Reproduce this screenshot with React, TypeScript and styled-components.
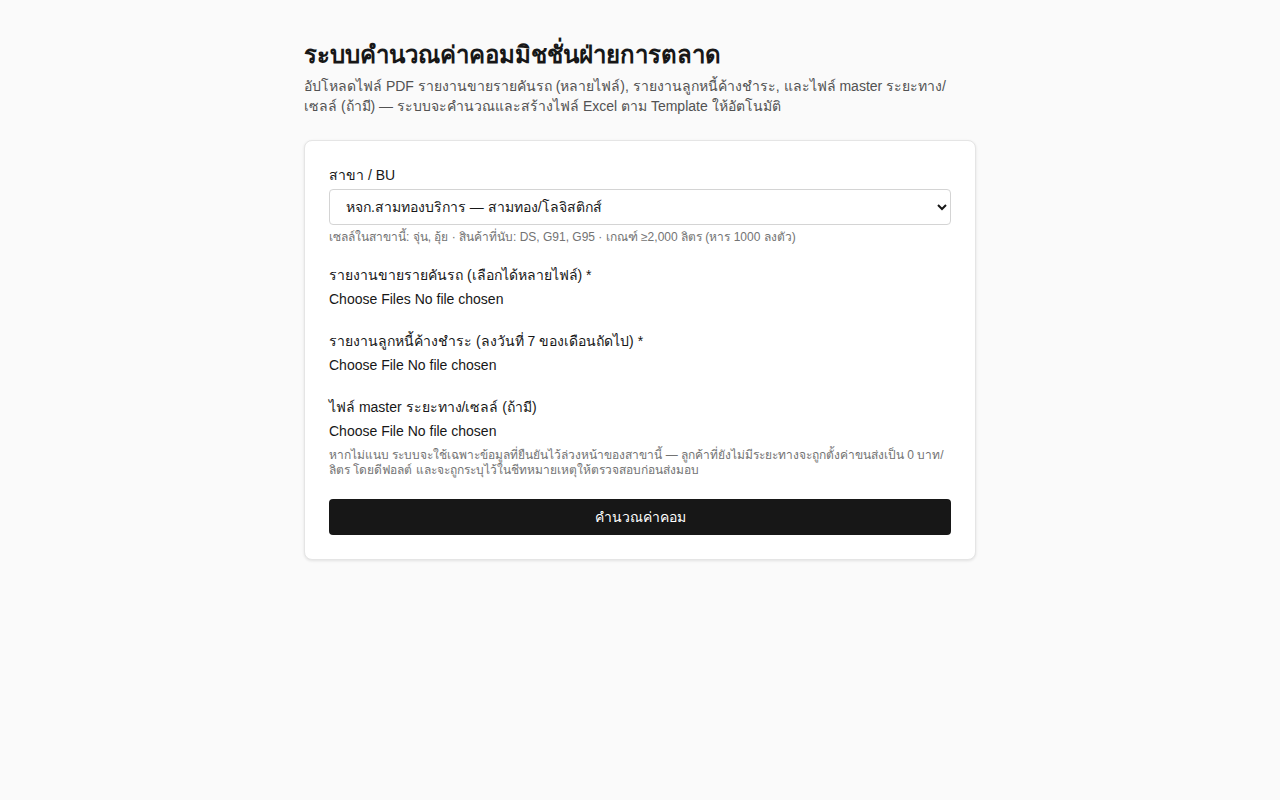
import styled, { createGlobalStyle } from 'styled-components';

const GlobalStyle = createGlobalStyle`
  * { box-sizing: border-box; }
  body {
    margin: 0;
    background: #fafafa;
    color: #171717;
    font-family: "Liberation Sans", Arial, "Noto Sans", sans-serif;
  }
`;

const Page = styled.main`
  max-width: 672px;
  margin: 0 auto;
  padding: 40px 0;
`;

const Title = styled.h1`
  margin: 0 0 6px;
  font-size: 24px;
  line-height: 30px;
  font-weight: 700;
  color: #171717;
`;

const Lead = styled.p`
  margin: 0 0 24px;
  font-size: 14px;
  line-height: 20px;
  color: #525252;
`;

const Card = styled.form`
  background: #fff;
  border: 1px solid #e5e5e5;
  border-radius: 8px;
  box-shadow: 0 1px 3px rgba(0, 0, 0, 0.1);
  padding: 24px;
  display: flex;
  flex-direction: column;
  gap: 20px;
`;

const Field = styled.div`
  display: flex;
  flex-direction: column;
`;

const Label = styled.label`
  font-size: 14px;
  line-height: 20px;
  color: #171717;
  margin-bottom: 4px;
`;

const Select = styled.select`
  height: 36px;
  width: 100%;
  padding: 0 12px;
  border: 1px solid #d4d4d4;
  border-radius: 4px;
  background: #fff;
  font: inherit;
  font-size: 14px;
  color: #171717;
`;

const FileInput = styled.input`
  font: inherit;
  font-size: 14px;
  line-height: 20px;
  padding: 0 0 2px;
  color: #171717;
  &::file-selector-button {
    margin: 0 4px 0 0;
    padding: 0;
    border: 0;
    background: transparent;
    font: inherit;
    color: inherit;
  }
`;

const Hint = styled.p`
  margin: 5px 0 0;
  font-size: 12px;
  line-height: 15px;
  color: #737373;
`;

const Submit = styled.button`
  height: 36px;
  margin-top: 1px;
  border: 0;
  border-radius: 4px;
  background: #171717;
  color: #fff;
  font: inherit;
  font-size: 14px;
  cursor: pointer;
`;

export default function App() {
  return (
    <>
      <GlobalStyle />
      <Page>
        <Title>ระบบคำนวณค่าคอมมิชชั่นฝ่ายการตลาด</Title>
        <Lead>
          อัปโหลดไฟล์ PDF รายงานขายรายคันรถ (หลายไฟล์), รายงานลูกหนี้ค้างชำระ, และไฟล์ master ระยะทาง/เซลล์ (ถ้ามี) — ระบบจะคำนวณและสร้างไฟล์ Excel ตาม Template ให้อัตโนมัติ
        </Lead>
        <Card onSubmit={e => e.preventDefault()}>
          <Field>
            <Label>สาขา / BU</Label>
            <Select defaultValue="samthong">
              <option value="samthong">หจก.สามทองบริการ — สามทอง/โลจิสติกส์</option>
            </Select>
            <Hint>เซลล์ในสาขานี้: จุ่น, อุ้ย · สินค้าที่นับ: DS, G91, G95 · เกณฑ์ ≥2,000 ลิตร (หาร 1000 ลงตัว)</Hint>
          </Field>
          <Field>
            <Label>รายงานขายรายคันรถ (เลือกได้หลายไฟล์) *</Label>
            <FileInput type="file" multiple />
          </Field>
          <Field>
            <Label>รายงานลูกหนี้ค้างชำระ (ลงวันที่ 7 ของเดือนถัดไป) *</Label>
            <FileInput type="file" />
          </Field>
          <Field>
            <Label>ไฟล์ master ระยะทาง/เซลล์ (ถ้ามี)</Label>
            <FileInput type="file" />
            <Hint>
              หากไม่แนบ ระบบจะใช้เฉพาะข้อมูลที่ยืนยันไว้ล่วงหน้าของสาขานี้ — ลูกค้าที่ยังไม่มีระยะทางจะถูกตั้งค่าขนส่งเป็น 0 บาท/ลิตร โดยดีฟอลต์ และจะถูกระบุไว้ในชีทหมายเหตุให้ตรวจสอบก่อนส่งมอบ
            </Hint>
          </Field>
          <Submit type="submit">คำนวณค่าคอม</Submit>
        </Card>
      </Page>
    </>
  );
}
